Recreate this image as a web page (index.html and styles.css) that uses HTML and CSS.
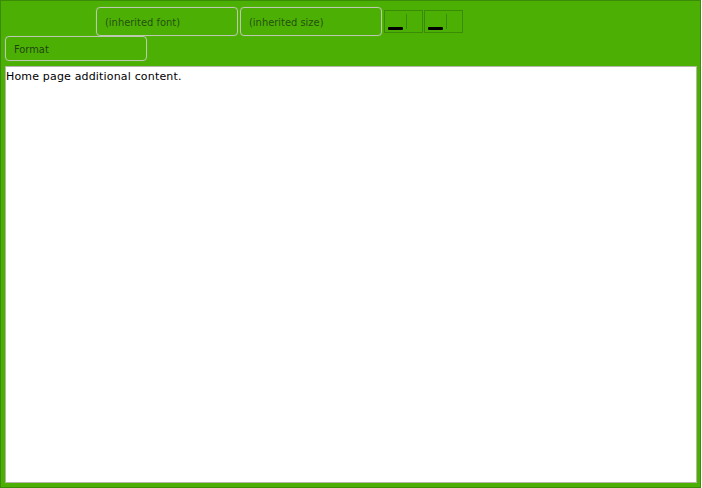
FILE: index.html
```html
<!DOCTYPE html>
<html lang="en">
<head>
<meta charset="utf-8">
<title>Editor</title>
<link rel="stylesheet" href="styles.css">
</head>
<body>
<div class="window">
  <div class="toolbar">
    <div class="row row-top">
      <div class="combo combo-tall">(inherited font)</div>
      <div class="combo combo-tall">(inherited size)</div>
      <div class="splits">
        <div class="split">
          <span class="swatch"></span>
          <span class="divider"></span>
        </div>
        <div class="split">
          <span class="swatch"></span>
          <span class="divider"></span>
        </div>
      </div>
    </div>
    <div class="row">
      <div class="combo combo-format">Format</div>
    </div>
  </div>
  <div class="editor">Home page additional content.</div>
</div>
</body>
</html>
```
FILE: styles.css
```css
html, body {
  margin: 0;
  padding: 0;
  background: #ffffff;
}
.window {
  box-sizing: border-box;
  width: 701px;
  height: 488px;
  background: #4cb004;
  border: 1px solid #3a8c08;
  padding: 6px 3px 4px 4px;
  display: flex;
  flex-direction: column;
}
.toolbar {
  display: flex;
  flex-direction: column;
}
.row {
  display: flex;
  gap: 2px;
}
.row-top {
  padding-left: 91px;
  height: 29px;
  align-items: flex-start;
}
.combo {
  box-sizing: border-box;
  width: 142px;
  border: 1px solid #bcc8b0;
  border-radius: 4px;
  padding: 2px 0 0 8px;
  font-family: "DejaVu Sans Condensed", "DejaVu Sans", sans-serif;
  font-stretch: condensed;
  font-size: 11px;
  color: #26500f;
  display: flex;
  align-items: center;
  box-shadow: 0 0 1px rgba(188, 200, 176, 0.6);
}
.combo-tall {
  height: 29px;
}
.combo-format {
  height: 25px;
  color: #1f460c;
}
.splits {
  display: flex;
  gap: 1px;
  margin-top: 3px;
}
.split {
  box-sizing: border-box;
  width: 39px;
  height: 23px;
  border: 1px solid #3a8c08;
  position: relative;
}
.swatch {
  position: absolute;
  left: 3px;
  bottom: 2px;
  width: 15px;
  height: 3px;
  background: #000000;
  border-radius: 1px;
}
.divider {
  position: absolute;
  left: 21px;
  top: 3px;
  bottom: 3px;
  width: 1px;
  background: #3a8c08;
}
.editor {
  box-sizing: border-box;
  flex: 1;
  margin-top: 5px;
  background: #ffffff;
  border: 1px solid #b5b8a8;
  font-family: "DejaVu Sans", Verdana, sans-serif;
  font-size: 11px;
  letter-spacing: 0.17px;
  color: #000000;
  padding: 2px 0 0 0;
  line-height: 15px;
}
```
